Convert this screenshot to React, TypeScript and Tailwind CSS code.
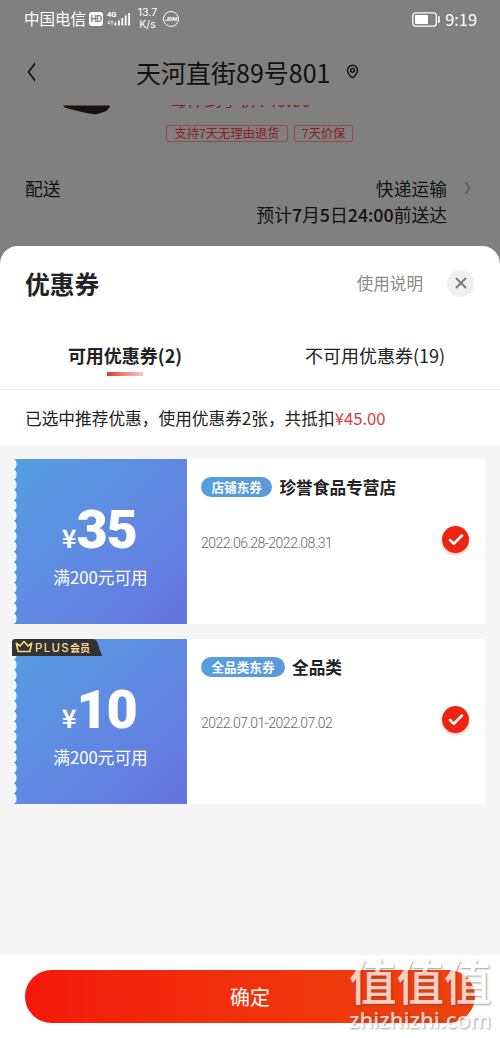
import { Check, MapPin, X } from 'lucide-react';

interface Coupon {
  id: string;
  amount: number;
  condition: string;
  tag: string;
  title: string;
  period: string;
  plus: boolean;
}

const coupons: Coupon[] = [
  {
    id: '1',
    amount: 35,
    condition: '满200元可用',
    tag: '店铺东券',
    title: '珍誉食品专营店',
    period: '2022.06.28-2022.08.31',
    plus: false,
  },
  {
    id: '2',
    amount: 10,
    condition: '满200元可用',
    tag: '全品类东券',
    title: '全品类',
    period: '2022.07.01-2022.07.02',
    plus: true,
  },
];

// 16 notches down the left edge of a ticket
const notches = Array.from({ length: 16 }, (_, i) => i * 10.3);

const StatusBar = () => (
  <div className="flex h-[38px] items-center pl-[24px] pr-[23px] text-white">
    <span className="text-[15.5px] leading-none">中国电信</span>
    <span className="ml-[3px] flex h-[14px] w-[14px] items-center justify-center rounded-[3px] bg-white font-['Roboto'] text-[9px] font-bold leading-none tracking-[-0.5px] text-[#808080]">
      HD
    </span>
    <svg className="ml-[4px] h-[18px] w-[25px]" viewBox="0 0 25 18" fill="#fff">
      <text x="0" y="6.8" fontSize="7.5" fontWeight="700" fontFamily="Roboto">4G</text>
      <path d="M2 10v4M.6 12.5 2 14.2l1.4-1.7M5 15v-4M3.7 12.4 5 10.8l1.3 1.6" stroke="#fff" strokeWidth="0.7" fill="none" />
      <rect x="7.5" y="12.5" width="1.8" height="3" />
      <rect x="11" y="10.5" width="1.8" height="5" />
      <rect x="14.4" y="8" width="1.8" height="7.5" />
      <rect x="17.8" y="5.5" width="1.8" height="10" />
      <rect x="21.2" y="3" width="1.8" height="12.5" />
    </svg>
    <span className="ml-[4px] w-[23px] text-center font-['Inter'] text-[10.5px] leading-[12px]">
      13.7
      <br />
      K/s
    </span>
    <span className="ml-[4px] flex h-[16px] w-[16px] items-center justify-center rounded-full border border-white font-['Roboto'] text-[6px] font-bold italic leading-none tracking-[-0.2px]">
      JDM
    </span>
    <svg className="ml-auto h-[15px] w-[28px]" viewBox="0 0 28 15" fill="none">
      <rect x="0.8" y="0.8" width="23.5" height="13.4" rx="3" stroke="#fff" strokeWidth="1.3" />
      <rect x="3" y="3" width="13" height="9" rx="0.8" fill="#fff" />
      <rect x="26" y="4" width="1.7" height="7" rx="0.8" fill="#fff" />
    </svg>
    <span className="ml-[5px] text-[16.4px] leading-none">9:19</span>
  </div>
);

const ProductPage = () => (
  <div className="h-[246px] bg-[#808080] text-[#111]">
    <StatusBar />

    {/* Address */}
    <div className="flex h-[67px] items-center pl-[27px]">
      <svg className="h-[20px] w-[9px]" viewBox="0 0 9 20" fill="none" stroke="#111" strokeWidth="1.7">
        <path d="M8 1.5 1.5 10 8 18.5" />
      </svg>
      <span className="ml-[100px] mt-[2px] text-[25px] leading-none">天河直街89号801</span>
      <MapPin className="ml-[15px] h-[15px] w-[15px]" strokeWidth={2.3} />
    </div>

    {/* Product row scrolled under the header */}
    <div className="flex h-[20px] items-start pl-[63px]">
      <svg className="h-[10px] w-[47px]" viewBox="0 0 47 10">
        <path d="M0 .5h47q-1 4-5 6l-9 3Q20 8 2 2.5z" fill="#17110f" />
      </svg>
      <div className="ml-[59px] flex h-[3px] items-end overflow-hidden">
        <span className="mb-[-2px] text-[17.6px] italic leading-[20px] text-[#8a1c1c]">每件到手价¥40.00</span>
      </div>
    </div>
    <div className="flex gap-[6px] pl-[166px] text-[12.3px] leading-none text-[#8c2020]">
      <span className="flex h-[17px] w-[122px] items-center justify-center rounded-[2px] border border-[#96494a]">
        支持7天无理由退货
      </span>
      <span className="flex h-[17px] w-[59px] items-center justify-center rounded-[2px] border border-[#96494a]">
        7天价保
      </span>
    </div>

    {/* Delivery */}
    <div className="flex pl-[25px] pt-[33px] text-[17.8px] leading-[26px]">
      <span>配送</span>
      <div className="ml-auto text-right">
        <p>快递运输</p>
        <p className="text-[17.8px]">
          预计<span className="font-medium">7</span>月<span className="font-medium">5</span>日
          <span className="font-medium">24:00</span>前送达
        </p>
      </div>
      <svg className="ml-[17px] mr-[28px] mt-[6px] h-[14px] w-[8px]" viewBox="0 0 8 14" fill="none" stroke="#5a5a5a" strokeWidth="1.5">
        <path d="M1.5 1 5.5 7l-4 6" />
      </svg>
    </div>
  </div>
);

const PlusTag = () => (
  <div className="absolute left-[-2px] top-0 h-[17px] w-[90px]">
    <svg className="absolute inset-0" width="90" height="17" viewBox="0 0 90 17" fill="none">
      <path d="M3 0h78q3 0 4 2.5L90 17H0V3q0-3 3-3z" fill="#343232" />
      <path
        d="M4.3 4.2 8 7l4-4.5L16 7l3.7-2.8-1.9 8.3H6.2z"
        stroke="#f5dc80"
        strokeWidth="1.6"
        strokeLinejoin="round"
      />
    </svg>
    <span className="absolute left-[23px] top-[2px] whitespace-nowrap text-[11px] leading-[13px] text-[#f3dda0]">
      <span className="font-['Inter'] text-[11.5px] font-medium tracking-[1.3px]">PLUS</span>
      <span className="text-[10px] font-bold">会员</span>
    </span>
  </div>
);

const CouponCard = ({ coupon }: { coupon: Coupon }) => (
  <div className="relative flex h-[165px] bg-white">
    <div className="relative flex w-[173px] flex-col items-center bg-gradient-to-br from-[#559fe3] to-[#6674df] text-white">
      <svg className="absolute left-0 top-0" width="3" height="165" viewBox="0 0 3 165">
        {notches.map((y) => (
          <path key={y} d={`M0 ${y + 0.2}C3.4 ${y + 1} 3.4 ${y + 9.3} 0 ${y + 10.1}z`} fill="#f5f5f5" />
        ))}
      </svg>
      <div className="mt-[44px] flex items-baseline pr-[3px] leading-[54px]">
        <span className="text-[25px] font-bold leading-none">¥</span>
        <span className="font-['Roboto'] text-[54px] font-black tracking-[-1.5px]">{coupon.amount}</span>
      </div>
      <span className="mt-[11px] text-[16.7px] leading-[18px]">{coupon.condition}</span>
    </div>

    <div className="flex flex-1 flex-col pl-[14px]">
      <div className="mt-[17px] flex h-[22px] items-center gap-[7px]">
        <span className="flex h-[20px] items-center rounded-full bg-gradient-to-r from-[#529fdf] to-[#5c98dc] px-[10.5px] text-[12.6px] font-bold leading-none text-white">
          {coupon.tag}
        </span>
        <span className="text-[16.7px] font-bold leading-none text-[#222]">{coupon.title}</span>
      </div>
      <div className="mt-[28px] flex items-center justify-between pr-[16px]">
        <span className="mt-[6px] font-['Roboto'] text-[14px] font-light leading-none tracking-[-0.5px] text-[#666]">
          {coupon.period}
        </span>
        <span className="flex h-[27px] w-[27px] items-center justify-center rounded-full bg-[#ee2410] text-white shadow-[0_2px_3px_rgba(238,36,16,0.25)]">
          <Check className="h-[18px] w-[18px]" strokeWidth={3.4} />
        </span>
      </div>
    </div>

    {coupon.plus && <PlusTag />}
  </div>
);

const App = () => {
  return (
    <div className="relative h-[1038px] w-[500px] overflow-hidden bg-[#808080] font-['Noto_Sans_CJK_SC',sans-serif]">
      <ProductPage />

      {/* Coupon sheet */}
      <div className="flex h-[792px] flex-col overflow-hidden rounded-t-[18px] bg-white text-[#222]">
        <div className="flex h-[74px] items-center pl-[25px] pr-[26px]">
          <h1 className="text-[24.8px] font-bold leading-none">优惠券</h1>
          <span className="ml-auto text-[16.6px] leading-none text-[#8b8b8b]">使用说明</span>
          <button className="ml-[24px] flex h-[27px] w-[27px] items-center justify-center rounded-full bg-[#efefef] text-[#777]">
            <X className="h-[18px] w-[18px]" strokeWidth={2.4} />
          </button>
        </div>

        {/* Tabs */}
        <div className="flex h-[70px] border-b border-[#eeeeee] text-[18px]">
          <div className="flex w-[250px] flex-col items-center pt-[22px]">
            <span className="font-bold leading-[26px]">可用优惠券(2)</span>
            <span className="mt-[4px] h-[4px] w-[36px] bg-gradient-to-r from-[#d8382b] to-[#f5caca]" />
          </div>
          <div className="flex w-[250px] justify-center pt-[22px]">
            <span className="leading-[26px]">不可用优惠券(19)</span>
          </div>
        </div>

        <p className="flex h-[55px] items-center pl-[25px] pt-[2px] text-[16.7px]">
          已选中推荐优惠，使用优惠券2张，共抵扣
          <span className="text-[#d93a3f]">¥45.00</span>
        </p>

        <div className="flex flex-1 flex-col gap-[15px] bg-[#f5f5f5] pl-[14px] pr-[15px] pt-[14px]">
          {coupons.map((coupon) => (
            <CouponCard key={coupon.id} coupon={coupon} />
          ))}
        </div>

        <div className="h-[83px] px-[25px] pt-[15px]">
          <button className="flex h-[53px] w-full items-center justify-center rounded-full bg-gradient-to-r from-[#f4170b] to-[#ee420e] text-[20px] text-white">
            确定
          </button>
        </div>
      </div>

      {/* Watermark */}
      <div className="absolute left-[349px] top-[954px] w-[148px] text-white opacity-75 [text-shadow:1px_1px_2px_rgba(70,70,70,0.7)]">
        <p className="whitespace-nowrap text-[47.5px] font-medium leading-[52px]">值值值</p>
        <p className="whitespace-nowrap font-['Noto_Sans'] text-[22px] font-medium leading-[27px]">zhizhizhi.com</p>
      </div>
    </div>
  );
};

export default App;
